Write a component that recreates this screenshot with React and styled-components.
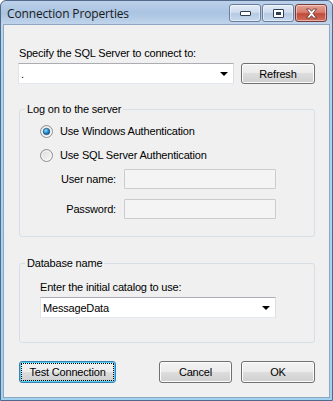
import React from "react";
import styled, { createGlobalStyle } from "styled-components";

const GlobalStyle = createGlobalStyle`
  html, body {
    margin: 0;
    padding: 0;
    background: #ffffff;
  }
  * {
    box-sizing: border-box;
  }
`;

const Window = styled.div`
  width: 333px;
  height: 401px;
  display: flex;
  flex-direction: column;
  border: 1px solid #52698a;
  border-radius: 6px 6px 0 0;
  background: linear-gradient(#bcd1ea 0px, #a9c3e1 12px, #c2d6ec 24px, #a8d8f2 40px, #9fd3f0 100%);
  padding: 0 2px 2px 2px;
  font-family: "Liberation Sans", Arial, sans-serif;
  font-size: 11px;
  letter-spacing: -0.18px;
  color: #000;
`;

const TitleBar = styled.div`
  height: 23px;
  display: flex;
  align-items: flex-start;
  justify-content: space-between;
  padding: 0 3px 0 4px;
`;

const Title = styled.div`
  font-family: "Open Sans", "Noto Sans", sans-serif;
  font-size: 12px;
  letter-spacing: -0.15px;
  line-height: 16px;
  margin-top: 5px;
  color: #1a1a1a;
`;

const CaptionButtons = styled.div`
  display: flex;
  gap: 1px;
  margin-top: 3px;
`;

const CaptionButton = styled.div`
  width: 32px;
  height: 18px;
  border: 1px solid ${(p) => (p.$close ? "#7a3a3a" : "#6b7f9b")};
  border-radius: 3px;
  display: flex;
  align-items: center;
  justify-content: center;
  background: ${(p) =>
    p.$close
      ? "linear-gradient(#e5a293 0%, #d77e6e 45%, #c24a3a 55%, #d0705d 100%)"
      : "linear-gradient(#e3ecf7 0%, #cfdcee 45%, #b6c9e1 55%, #c8daee 100%)"};
  box-shadow: inset 0 0 0 1px rgba(255, 255, 255, 0.45);
`;

const Client = styled.div`
  flex: 1;
  background: #f0f0f0;
  border: 1px solid #8fa6c2;
  padding: 22px 14px 0 14px;
  display: flex;
  flex-direction: column;
`;

const Label = styled.div`
  line-height: 13px;
  height: 13px;
  white-space: nowrap;
  margin-left: ${(p) => p.$indent || 0}px;
`;

const Row = styled.div`
  display: flex;
  align-items: center;
  justify-content: space-between;
  margin-top: ${(p) => p.$top || 0}px;
`;

const Combo = styled.div`
  width: ${(p) => p.$width}px;
  height: 21px;
  background: #ffffff;
  border: 1px solid #abadb3;
  border-left-color: #e2e3ea;
  border-right-color: #dbdfe6;
  border-bottom-color: #e3e9ef;
  display: flex;
  align-items: center;
  justify-content: space-between;
  padding: 0 5px 0 2px;
  margin-top: ${(p) => p.$top || 0}px;
`;

const Arrow = styled.span`
  width: 0;
  height: 0;
  border-left: 4px solid transparent;
  border-right: 4px solid transparent;
  border-top: 4px solid #000;
`;

const Button = styled.button`
  width: ${(p) => p.$width}px;
  height: ${(p) => p.$height || 22}px;
  font-family: "Liberation Sans", Arial, sans-serif;
  font-size: 11px;
  letter-spacing: -0.18px;
  color: #000;
  padding: 0;
  border: 1px solid ${(p) => (p.$focused ? "#3c7fb1" : "#707070")};
  border-radius: 3px;
  background: linear-gradient(#f2f2f2 0%, #ebebeb 50%, #dddddd 50%, #cfcfcf 100%);
  box-shadow: inset 0 0 0 1px ${(p) => (p.$focused ? "#4fd2f7" : "#fcfcfc")};
  outline: ${(p) => (p.$focused ? "1px dotted #000" : "none")};
  outline-offset: -3px;
`;

const Group = styled.fieldset`
  margin: ${(p) => p.$top}px 0 0 1px;
  border: 1px solid #d5dfe5;
  border-radius: 3px;
  padding: 0;
  min-width: 0;
`;

const Legend = styled.legend`
  margin-left: 5px;
  padding: 0 2px;
  line-height: 13px;
`;

const GroupBody = styled.div`
  padding: ${(p) => p.$pad};
`;

const RadioRow = styled.label`
  display: flex;
  align-items: center;
  gap: 7px;
  height: 13px;
  line-height: 13px;
  margin-top: ${(p) => p.$top || 0}px;
`;

const FieldGrid = styled.div`
  display: grid;
  grid-template-columns: 76px 152px;
  column-gap: 8px;
  row-gap: 10px;
  margin-top: 7px;
  align-items: center;
`;

const FieldLabel = styled.span`
  justify-self: end;
  line-height: 13px;
  margin-top: 1px;
`;

const TextBox = styled.div`
  height: 20px;
  background: #f4f4f4;
  border: 1px solid #c9cbcf;
  border-radius: 1px;
`;

const Footer = styled.div`
  display: flex;
  align-items: center;
  margin: 18px 0 0 1px;
  gap: 9px;
`;

const Spacer = styled.div`
  flex: 1;
`;

const Radio = ({ checked }) => (
  <svg width="13" height="13" viewBox="0 0 13 13">
    <defs>
      <linearGradient id="rg" x1="0" y1="0" x2="1" y2="1">
        <stop offset="0" stopColor="#d8d8d8" />
        <stop offset="1" stopColor="#fbfbfb" />
      </linearGradient>
      <radialGradient id="dot" cx="0.4" cy="0.35" r="0.7">
        <stop offset="0" stopColor="#8ee0fb" />
        <stop offset="0.5" stopColor="#2b8fd0" />
        <stop offset="1" stopColor="#0c4a80" />
      </radialGradient>
    </defs>
    <circle cx="6.5" cy="6.5" r="6" fill="url(#rg)" stroke="#8e8f8f" />
    <circle cx="6.5" cy="6.5" r="4.5" fill="none" stroke="#f6f6f6" />
    {checked && <circle cx="6.5" cy="6.5" r="3.3" fill="url(#dot)" stroke="#1c4f7c" strokeWidth="0.6" />}
  </svg>
);

const MinGlyph = () => (
  <svg width="11" height="6" viewBox="0 0 11 6">
    <rect x="0.5" y="1.5" width="10" height="4" fill="#fff" stroke="#2f3e55" rx="0.5" />
  </svg>
);

const MaxGlyph = () => (
  <svg width="11" height="9" viewBox="0 0 11 9">
    <rect x="0.5" y="0.5" width="10" height="8" fill="#fff" stroke="#2f3e55" rx="0.5" />
    <rect x="3" y="3" width="5" height="3" fill="#2f3e55" />
  </svg>
);

const CloseGlyph = () => (
  <svg width="13" height="11" viewBox="0 0 13 11">
    <path d="M1.5 1 L4.5 1 L6.5 3.3 L8.5 1 L11.5 1 L8 5.5 L11.5 10 L8.5 10 L6.5 7.7 L4.5 10 L1.5 10 L5 5.5 Z" fill="#fff" stroke="#5a2a2a" strokeWidth="0.8" strokeLinejoin="round" />
  </svg>
);

export default function App() {
  return (
    <>
      <GlobalStyle />
      <Window>
        <TitleBar>
          <Title>Connection Properties</Title>
          <CaptionButtons>
            <CaptionButton><MinGlyph /></CaptionButton>
            <CaptionButton><MaxGlyph /></CaptionButton>
            <CaptionButton $close><CloseGlyph /></CaptionButton>
          </CaptionButtons>
        </TitleBar>
        <Client>
          <Label $indent={1}>Specify the SQL Server to connect to:</Label>
          <Row $top={3}>
            <Combo $width={216}>
              <span>.</span>
              <Arrow />
            </Combo>
            <Button $width={74} $height={21}>Refresh</Button>
          </Row>
          <Group $top={19}>
            <Legend>Log on to the server</Legend>
            <GroupBody $pad="9px 0 17px 20px">
              <RadioRow>
                <Radio checked />
                Use Windows Authentication
              </RadioRow>
              <RadioRow $top={11}>
                <Radio />
                Use SQL Server Authentication
              </RadioRow>
              <FieldGrid>
                <FieldLabel>User name:</FieldLabel>
                <TextBox />
                <FieldLabel>Password:</FieldLabel>
                <TextBox />
              </FieldGrid>
            </GroupBody>
          </Group>
          <Group $top={20}>
            <Legend>Database name</Legend>
            <GroupBody $pad="11px 0 24px 20px">
              <Label>Enter the initial catalog to use:</Label>
              <Combo $width={236} $top={3}>
                <span>MessageData</span>
                <Arrow />
              </Combo>
            </GroupBody>
          </Group>
          <Footer>
            <Button $width={97} $focused>Test Connection</Button>
            <Spacer />
            <Button $width={73}>Cancel</Button>
            <Button $width={74}>OK</Button>
          </Footer>
        </Client>
      </Window>
    </>
  );
}
